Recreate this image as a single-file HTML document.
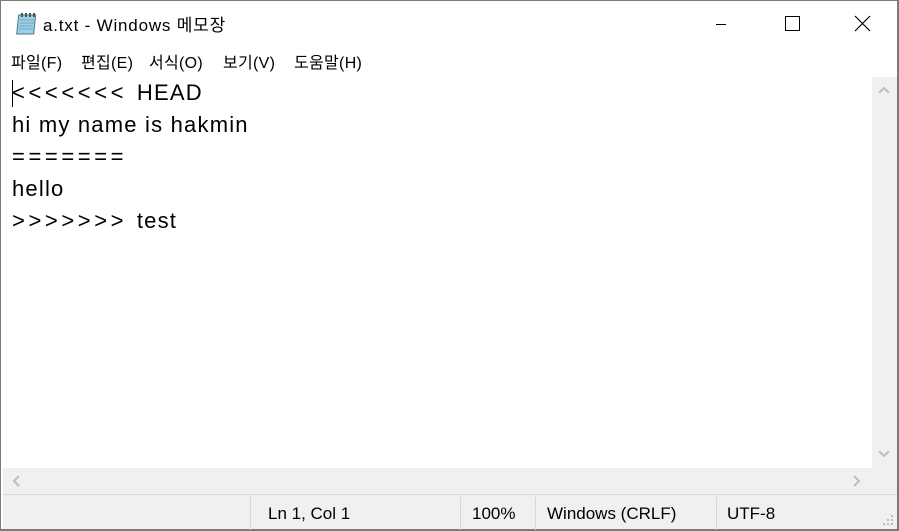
<!DOCTYPE html>
<html><head><meta charset="utf-8"><style>
*{margin:0;padding:0;box-sizing:border-box}
body{width:899px;height:531px;overflow:hidden;background:#fff;font-family:"Segoe UI","Liberation Sans","Noto Sans CJK KR",sans-serif;position:relative}
.win{position:absolute;left:0;top:0;width:899px;height:531px;border:1px solid #7a7a7a;border-right-width:2px;border-bottom-width:2px;background:#fff}
.title{position:absolute;left:0;top:0;width:896px;height:46px;background:#fff}
.title .t{position:absolute;left:42px;top:10px;font-size:17px;color:#000;letter-spacing:0.8px}
.menu{position:absolute;left:0;top:46px;width:896px;height:29px;background:#fff;font-size:16px;color:#000;letter-spacing:0.3px}
.menu span{position:absolute;top:2px}
.edit{position:absolute;left:2px;top:76px;width:869px;height:391px;background:#fff;font-size:22px;line-height:32px;color:#000;padding-left:9px;padding-top:0px;white-space:pre;letter-spacing:1.2px}
.w{letter-spacing:3.6px}
.caret{position:absolute;left:11px;top:79px;width:1px;height:27px;background:#000}
.vs{position:absolute;left:871px;top:76px;width:25px;height:391px;background:#f0f0f0}
.hs{position:absolute;left:2px;top:467px;width:894px;height:26px;background:#f0f0f0}
.status{position:absolute;left:2px;top:493px;width:894px;height:35px;background:#f0f0f0;border-top:1px solid #d7d7d7;font-size:17px;color:#000}
.status span{position:absolute;top:9px}
.sep{position:absolute;top:2px;width:1px;height:33px;background:#d7d7d7}
</style></head><body>
<div class="win">
<div class="title">
<svg style="position:absolute;left:14px;top:11px" width="24" height="24" viewBox="0 0 24 24">
<rect x="4" y="3" width="17" height="19" fill="#9fd0e6" stroke="#4a7890" stroke-width="1" transform="skewX(-6)"/>
<g stroke="#6aa8c4" stroke-width="1"><line x1="5" y1="8" x2="19" y2="8"/><line x1="5" y1="11" x2="19" y2="11"/><line x1="4" y1="14" x2="18" y2="14"/><line x1="4" y1="17" x2="18" y2="17"/></g>
<g fill="#555"><rect x="6" y="1" width="2" height="4"/><rect x="10" y="1" width="2" height="4"/><rect x="14" y="1" width="2" height="4"/><rect x="18" y="1" width="2" height="4"/></g>
</svg>
<div class="t">a.txt - Windows 메모장</div>
<svg style="position:absolute;left:710px;top:14px" width="170" height="18">
<line x1="5" y1="9.5" x2="15" y2="9.5" stroke="#000"/>
<rect x="74.5" y="1.5" width="14" height="14" fill="none" stroke="#000"/>
<line x1="144" y1="1" x2="159" y2="16" stroke="#000" stroke-width="1.2"/><line x1="159" y1="1" x2="144" y2="16" stroke="#000" stroke-width="1.2"/>
</svg>
</div>
<div class="menu">
<span style="left:10px">파일(F)</span><span style="left:80px">편집(E)</span><span style="left:148px">서식(O)</span><span style="left:222px">보기(V)</span><span style="left:293px">도움말(H)</span>
</div>
<div class="edit"><span class="w">&lt;&lt;&lt;&lt;&lt;&lt;&lt; </span>HEAD
hi my name is hakmin
<span class="w">=======</span>
hello
<span class="w">&gt;&gt;&gt;&gt;&gt;&gt;&gt; </span>test</div>
<div class="caret"></div>
<div class="vs">
<svg style="position:absolute;left:6px;top:9px" width="12" height="8"><polyline points="1,7 6,2 11,7" fill="none" stroke="#bdbdbd" stroke-width="2"/></svg>
<svg style="position:absolute;left:6px;top:373px" width="12" height="8"><polyline points="1,1 6,6 11,1" fill="none" stroke="#bdbdbd" stroke-width="2"/></svg>
</div>
<div class="hs">
<svg style="position:absolute;left:9px;top:7px" width="8" height="12"><polyline points="7,1 2,6 7,11" fill="none" stroke="#bdbdbd" stroke-width="2"/></svg>
<svg style="position:absolute;left:850px;top:7px" width="8" height="12"><polyline points="1,1 6,6 1,11" fill="none" stroke="#bdbdbd" stroke-width="2"/></svg>
</div>
<div class="status">
<div class="sep" style="left:247px"></div>
<div class="sep" style="left:457px"></div>
<div class="sep" style="left:532px"></div>
<div class="sep" style="left:713px"></div>
<span style="left:265px">Ln 1, Col 1</span>
<span style="left:469px">100%</span>
<span style="left:544px">Windows (CRLF)</span>
<span style="left:724px">UTF-8</span>
<svg style="position:absolute;left:880px;top:20px" width="12" height="12" fill="#bdbdbd"><rect x="8" y="0" width="2" height="2"/><rect x="4" y="4" width="2" height="2"/><rect x="8" y="4" width="2" height="2"/><rect x="0" y="8" width="2" height="2"/><rect x="4" y="8" width="2" height="2"/><rect x="8" y="8" width="2" height="2"/></svg>
</div>
</div>
</body></html>
